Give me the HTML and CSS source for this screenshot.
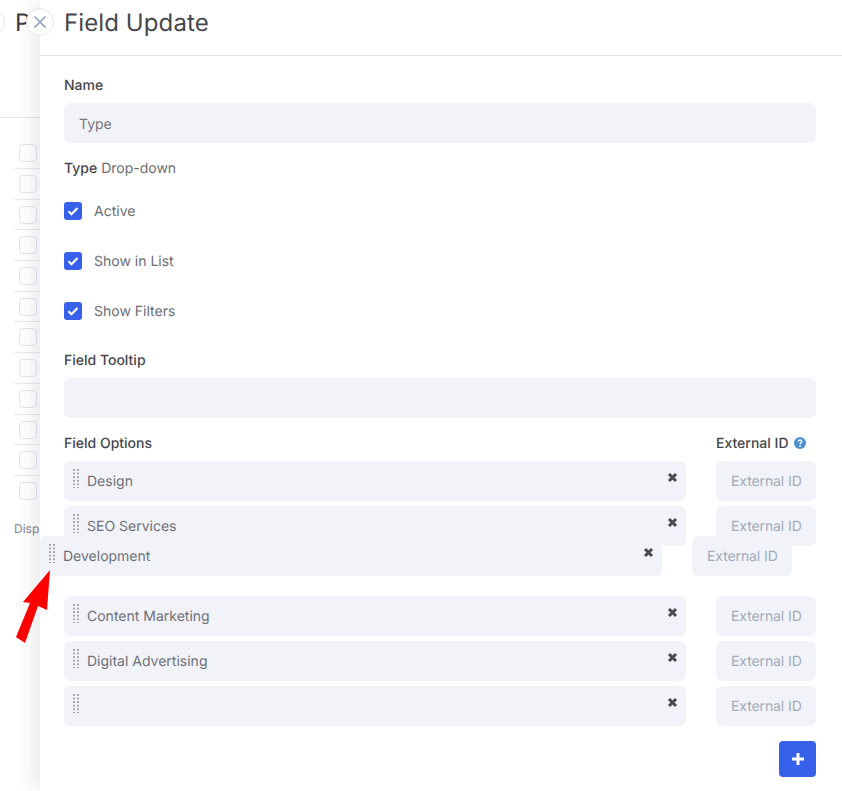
FILE: index.html
```html
<!DOCTYPE html>
<html lang="en">
<head>
<meta charset="utf-8">
<title>Field Update</title>
<link rel="stylesheet" href="styles.css">
</head>
<body>
<div class="backdrop">
  <div class="bg-head"><span class="bg-circle"></span><span class="bg-title">P</span></div>
  <div class="bg-rows">
    <div class="bg-row"><span class="bg-check"></span></div>
    <div class="bg-row"><span class="bg-check"></span></div>
    <div class="bg-row"><span class="bg-check"></span></div>
    <div class="bg-row"><span class="bg-check"></span></div>
    <div class="bg-row"><span class="bg-check"></span></div>
    <div class="bg-row"><span class="bg-check"></span></div>
    <div class="bg-row"><span class="bg-check"></span></div>
    <div class="bg-row"><span class="bg-check"></span></div>
    <div class="bg-row"><span class="bg-check"></span></div>
    <div class="bg-row"><span class="bg-check"></span></div>
    <div class="bg-row"><span class="bg-check"></span></div>
    <div class="bg-row bg-row-last"><span class="bg-check"></span></div>
  </div>
  <div class="bg-foot">Disp</div>
</div>

<aside class="panel">
  <button class="close" type="button" aria-label="Close">
    <svg width="14" height="14" viewBox="0 0 14 14"><path d="M1.5 1.5l11 11M12.5 1.5l-11 11" stroke="#8fa3bd" stroke-width="1.7" fill="none"/></svg>
  </button>
  <header class="panel-head"><h1 class="panel-title">Field Update</h1></header>
  <form class="panel-body">
    <div class="label name-label">Name</div>
    <div class="input">Type</div>
    <div class="type-line"><strong class="strong">Type</strong> Drop-down</div>

    <div class="checks">
      <label class="check"><span class="box"><svg width="12" height="10" viewBox="0 0 12 10"><path d="M1.5 5.2l3 3 6-6.2" stroke="#fff" stroke-width="2.2" fill="none"/></svg></span><span class="check-text">Active</span></label>
      <label class="check"><span class="box"><svg width="12" height="10" viewBox="0 0 12 10"><path d="M1.5 5.2l3 3 6-6.2" stroke="#fff" stroke-width="2.2" fill="none"/></svg></span><span class="check-text">Show in List</span></label>
      <label class="check"><span class="box"><svg width="12" height="10" viewBox="0 0 12 10"><path d="M1.5 5.2l3 3 6-6.2" stroke="#fff" stroke-width="2.2" fill="none"/></svg></span><span class="check-text">Show Filters</span></label>
    </div>

    <div class="label tooltip-label">Field Tooltip</div>
    <div class="input"></div>

    <div class="options-head">
      <div class="label">Field Options</div>
      <div class="label ext-label">External ID
        <svg class="help" width="12" height="12" viewBox="0 0 12 12"><circle cx="6" cy="6" r="6" fill="#4a90d0"/><path d="M4.2 4.6c0-1 .8-1.6 1.8-1.6s1.8.6 1.8 1.5c0 1.3-1.8 1.3-1.8 2.5" stroke="#fff" stroke-width="1.4" fill="none"/><circle cx="6" cy="9" r=".9" fill="#fff"/></svg>
      </div>
    </div>

    <div class="options">
      <div class="option">
        <div class="opt-main"><span class="grip"></span><span class="opt-text">Design</span><svg class="remove" width="11" height="11" viewBox="0 0 11 11"><path d="M2 2l7 7M9 2l-7 7" stroke="#4a4a4f" stroke-width="3" fill="none"/></svg></div>
        <div class="ext">External ID</div>
      </div>
      <div class="option">
        <div class="opt-main"><span class="grip"></span><span class="opt-text">SEO Services</span><svg class="remove" width="11" height="11" viewBox="0 0 11 11"><path d="M2 2l7 7M9 2l-7 7" stroke="#4a4a4f" stroke-width="3" fill="none"/></svg></div>
        <div class="ext">External ID</div>
      </div>
      <div class="placeholder"></div>
      <div class="option">
        <div class="opt-main"><span class="grip"></span><span class="opt-text">Content Marketing</span><svg class="remove" width="11" height="11" viewBox="0 0 11 11"><path d="M2 2l7 7M9 2l-7 7" stroke="#4a4a4f" stroke-width="3" fill="none"/></svg></div>
        <div class="ext">External ID</div>
      </div>
      <div class="option">
        <div class="opt-main"><span class="grip"></span><span class="opt-text">Digital Advertising</span><svg class="remove" width="11" height="11" viewBox="0 0 11 11"><path d="M2 2l7 7M9 2l-7 7" stroke="#4a4a4f" stroke-width="3" fill="none"/></svg></div>
        <div class="ext">External ID</div>
      </div>
      <div class="option">
        <div class="opt-main"><span class="grip"></span><span class="opt-text"></span><svg class="remove" width="11" height="11" viewBox="0 0 11 11"><path d="M2 2l7 7M9 2l-7 7" stroke="#4a4a4f" stroke-width="3" fill="none"/></svg></div>
        <div class="ext">External ID</div>
      </div>

      <div class="option ghost">
        <div class="opt-main"><span class="grip"></span><span class="opt-text">Development</span><svg class="remove" width="11" height="11" viewBox="0 0 11 11"><path d="M2 2l7 7M9 2l-7 7" stroke="#4a4a4f" stroke-width="3" fill="none"/></svg></div>
        <div class="ext">External ID</div>
      </div>
    </div>

    <div class="actions">
      <button class="add" type="button" aria-label="Add">
        <svg class="add-icon" width="12" height="12" viewBox="0 0 12 12"><path d="M6 0v12M0 6h12" stroke="#fff" stroke-width="3" fill="none"/></svg>
      </button>
    </div>
  </form>
</aside>

<svg class="arrow" width="36" height="74" viewBox="0 0 36 74"><path d="M34 0L31 40L22 36L9 73L0 67L14 33L7 32Z" fill="#fe0000"/></svg>
</body>
</html>
```

FILE: styles.css
```css
* { box-sizing: border-box; }
html, body { margin: 0; height: 100%; }
body {
  position: relative;
  width: 842px;
  height: 791px;
  overflow: hidden;
  background: #fff;
  font-family: Inter, "Liberation Sans", sans-serif;
  font-size: 14px;
  color: #6b6c75;
  text-rendering: geometricPrecision;
}

/* Page behind the drawer */
.backdrop { width: 100px; }
.bg-head {
  display: flex;
  align-items: flex-start;
  gap: 10px;
  height: 118px;
  padding-top: 8px;
  border-bottom: 1px solid #e3e4ea;
}
.bg-circle {
  flex: none;
  width: 28px;
  height: 28px;
  margin-left: -23px;
  border: 1px solid #e3e6ef;
  border-radius: 50%;
}
.bg-title { font-size: 24px; line-height: 29px; color: #3d3e44; }
.bg-rows { padding-left: 14px; }
.bg-row {
  height: 30.7px;
  padding: 6px 0 0 5px;
  border-bottom: 1px solid #e8e9ef;
}
.bg-row:first-child { padding-top: 26px; height: 51px; }
.bg-row-last { border-bottom: 0; }
.bg-check {
  display: block;
  width: 18px;
  height: 18px;
  border: 1px solid #e3e6ef;
  border-radius: 4px;
  background: #fff;
}
.bg-foot { margin: 14px 0 0 14px; font-size: 12px; line-height: 15px; color: #83848c; white-space: nowrap; }

/* Drawer */
.panel {
  position: absolute;
  top: 0;
  left: 40px;
  right: 0;
  bottom: 0;
  background: #fff;
  box-shadow: -12px 0 16px -4px rgba(40, 45, 70, .09);
}
.close {
  position: absolute;
  top: 8px;
  left: -14px;
  display: flex;
  align-items: center;
  justify-content: center;
  width: 28px;
  height: 28px;
  padding: 0 0 1px;
  border: 1px solid #e3e6ef;
  border-radius: 50%;
  background: #fff;
}
.panel-head {
  height: 56px;
  padding: 8px 24px 0;
  border-bottom: 1px solid #e3e4ea;
}
.panel-title {
  margin: 0;
  font-size: 24px;
  line-height: 30px;
  font-weight: 400;
  letter-spacing: .1px;
  color: #45464c;
}
.panel-body { padding: 0 26px 0 24px; }
.label {
  font-size: 14px;
  line-height: 18px;
  font-weight: 450;
  color: #45464c;
}
.name-label { margin-top: 21px; margin-bottom: 8px; }
.input {
  height: 40px;
  padding: 1px 15px 0;
  border-radius: 6px;
  background: #f1f3f8;
  font-size: 14px;
  line-height: 41px;
  color: #75767e;
}
.type-line { margin-top: 17px; line-height: 18px; }
.strong { font-weight: 450; color: #45464c; }
.checks { display: flex; flex-direction: column; gap: 32px; margin-top: 24px; }
.check { display: flex; align-items: center; gap: 12px; height: 18px; }
.check-text { padding-top: 2px; line-height: 16px; }
.box {
  display: flex;
  align-items: center;
  justify-content: center;
  width: 18px;
  height: 18px;
  border-radius: 3px;
  background: #3761ea;
}
.tooltip-label { margin-top: 32px; margin-bottom: 8px; }
.options-head { display: flex; margin-top: 17px; height: 18px; }
.ext-label { margin-left: auto; width: 100px; white-space: nowrap; }
.help { vertical-align: -1px; margin-left: 2px; }
.options { position: relative; display: flex; flex-direction: column; gap: 5px; margin-top: 8px; }
.option { display: flex; gap: 30px; height: 40px; }
.placeholder { height: 40px; }
.opt-main {
  position: relative;
  flex: 1;
  display: flex;
  align-items: center;
  padding-left: 23px;
  border-radius: 6px;
  background: #f1f3f8;
}
.opt-text { line-height: 39px; color: #6f7078; }
.grip {
  position: absolute;
  top: 8px;
  left: 9px;
  width: 6px;
  height: 19px;
  background-image: radial-gradient(circle at 1px 1px, #a3a5ad 1px, transparent 1.1px);
  background-size: 4px 3.6px;
}
.remove { position: absolute; top: 11px; right: 8px; }
.ext {
  flex: none;
  width: 100px;
  padding-left: 15px;
  border-radius: 6px;
  background: #f1f3f8;
  line-height: 41px;
  letter-spacing: -.1px;
  color: #a2abbb;
  white-space: nowrap;
  overflow: hidden;
}
.ghost { position: absolute; top: 75px; left: -24px; width: 752px; }
.actions { display: flex; justify-content: flex-end; margin-top: 15px; }
.add {
  display: flex;
  align-items: center;
  justify-content: center;
  width: 37px;
  height: 36px;
  padding: 0 0 1px;
  border: 0;
  border-radius: 4px;
  background: #3761ea;
}

/* Annotation */
.arrow { position: absolute; top: 570px; left: 16px; }
```
